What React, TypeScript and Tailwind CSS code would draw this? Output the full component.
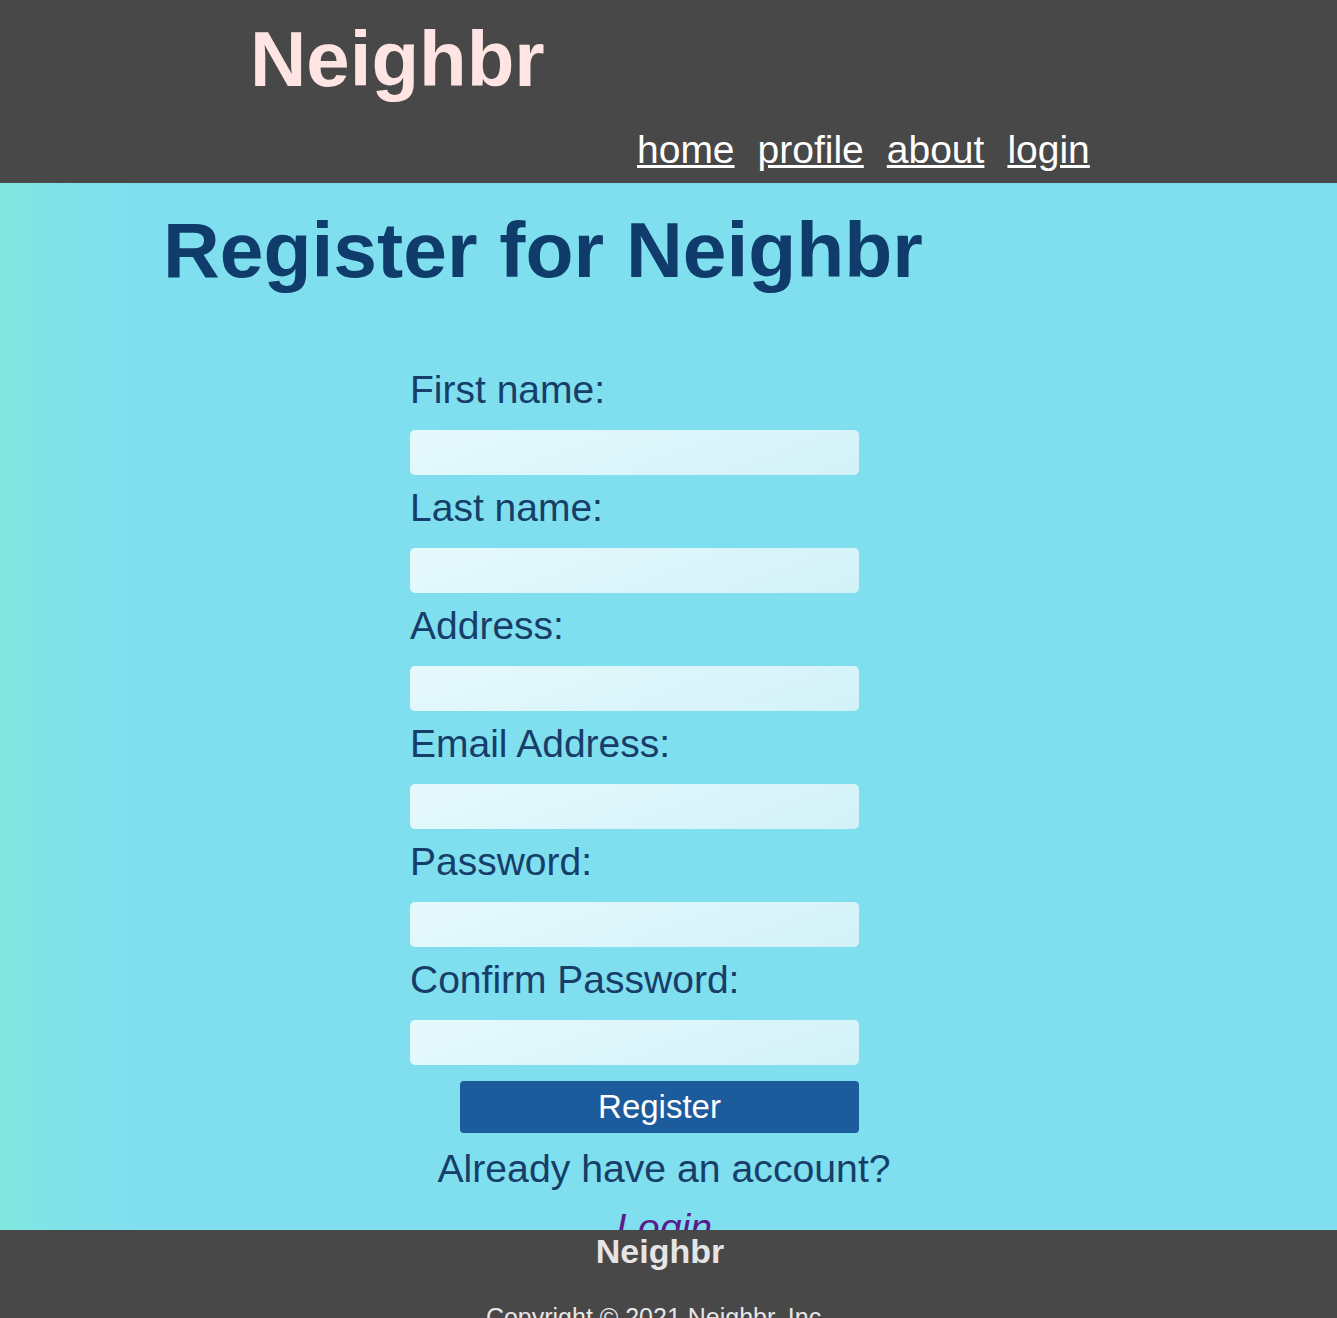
const fields = [
  "First name:",
  "Last name:",
  "Address:",
  "Email Address:",
  "Password:",
  "Confirm Password:",
];

export default function App() {
  return (
    <div className="min-h-screen bg-[#80dfef] font-['Liberation_Sans',Arial,sans-serif]">
      {/* Header */}
      <header className="h-[183px] bg-[#484848]">
        <div className="pl-[250px] pt-[14px] text-[78px] leading-[90px] font-bold text-[#ffe4e4]">
          Neighbr
        </div>
        <nav className="mt-[24px] flex gap-[23px] pl-[637px] text-[39px] leading-[44px] text-white">
          <a href="#" className="underline">home</a>
          <a href="#" className="underline">profile</a>
          <a href="#" className="underline">about</a>
          <a href="#" className="underline">login</a>
        </nav>
      </header>

      {/* Register form */}
      <main className="h-[1047px] pt-[22px] bg-[linear-gradient(to_right,#80e7df_0px,#80e2e9_60px,#80dfef_140px)]">
        <h1 className="pl-[163px] text-[78.6px] leading-[90px] font-bold text-[#103c6b]">
          Register for Neighbr
        </h1>

        <form className="ml-[410px] mt-[73px] w-[508px]">
          {fields.map((label) => (
            <div key={label} className="mb-[11px]">
              <label className="block h-[44px] text-[39px] leading-[44px] text-[#163e68]">
                {label}
              </label>
              <input
                type={label.includes("Password") ? "password" : "text"}
                className="mt-[18px] block h-[45px] w-[449px] rounded-[5px] bg-[linear-gradient(160deg,#e6f9fd,#d2f2f8)] outline-none"
              />
            </div>
          ))}

          <button
            type="button"
            className="ml-[50px] mt-[16px] block h-[52px] w-[399px] rounded-[4px] bg-[#1c5b9c] text-[33px] leading-[52px] text-white"
          >
            Register
          </button>

          <div className="mt-[14px] text-center text-[39.2px] leading-[44px] text-[#163e68]">
            <p>Already have an account?</p>
            <a href="#" className="mt-[15px] block italic text-[#5b1a8c]">
              Login
            </a>
          </div>
        </form>
      </main>

      {/* Footer */}
      <footer className="relative bg-[#484848] pb-[20px] pt-[1px]">
        <div className="w-[1320px] text-center text-[34px] leading-[40px] font-bold text-[#e6e4e4]">
          Neighbr
        </div>
        <p className="mt-[32px] w-[1314px] text-center text-[25px] leading-[28px] text-[#e6e6e6]">
          Copyright © 2021 Neighbr, Inc.
        </p>
      </footer>
    </div>
  );
}
